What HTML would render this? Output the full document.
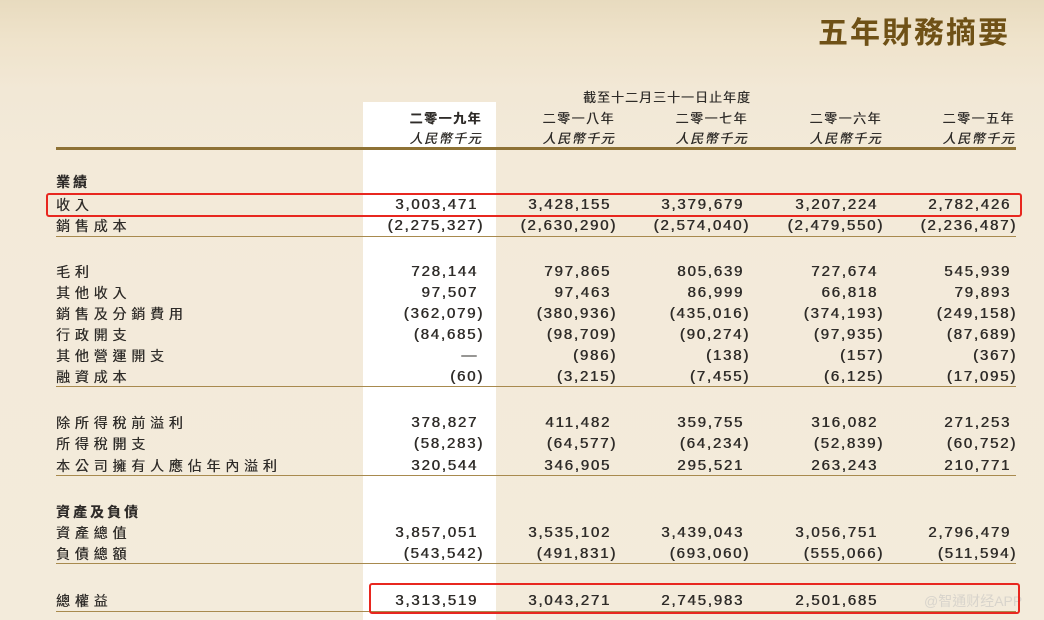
<!DOCTYPE html>
<html><head><meta charset="utf-8"><style>
body{margin:0;width:1044px;height:620px;overflow:hidden;position:relative;font-family:"Liberation Sans","Noto Sans CJK TC",sans-serif;color:#2f2c29;
background:linear-gradient(180deg,#e8dbbf 0px,#efe3cb 40px,#f2e8d6 90px,#f3ead9 160px,#f3ebdb 620px);}
.w{position:absolute;left:363px;top:102px;width:133px;height:518px;background:#fff;}
.t{position:absolute;white-space:nowrap;font-size:14px;letter-spacing:1px;}
.l{left:56px;letter-spacing:4.8px;text-shadow:0.3px 0 0 #2f2c29}
.n{text-align:right;width:130px;font-size:15px;letter-spacing:1.8px;text-shadow:0.5px 0 0 #2f2c29}
.line{position:absolute;left:56px;width:960px;height:1px;background:#a88a4e}
.box{position:absolute;border:2.5px solid #e8271f;border-radius:3px}
h1{position:absolute;right:34px;top:8px;margin:0;font-size:30px;font-weight:bold;color:#6f5116;letter-spacing:2px;font-family:"Noto Sans CJK TC",sans-serif}
.hd{position:absolute;font-size:13px;letter-spacing:1.5px;text-align:right;width:130px;text-shadow:0.4px 0 0 #2f2c29}
</style></head><body>
<div class="w"></div>
<h1>五年財務摘要</h1>
<div class="t" style="left:583px;top:87px;font-size:13px;text-shadow:0.3px 0 0 #2f2c29">截至十二月三十一日止年度</div>
<div class="hd" style="left:352px;top:108px;font-weight:bold">二零一九年</div>
<div class="hd" style="left:485px;top:108px">二零一八年</div>
<div class="hd" style="left:618px;top:108px">二零一七年</div>
<div class="hd" style="left:752px;top:108px">二零一六年</div>
<div class="hd" style="left:885px;top:108px">二零一五年</div>
<div class="hd" style="left:352px;top:128px;font-style:italic">人民幣千元</div>
<div class="hd" style="left:485px;top:128px;font-style:italic">人民幣千元</div>
<div class="hd" style="left:618px;top:128px;font-style:italic">人民幣千元</div>
<div class="hd" style="left:752px;top:128px;font-style:italic">人民幣千元</div>
<div class="hd" style="left:885px;top:128px;font-style:italic">人民幣千元</div>
<div class="line" style="top:147px;height:3px;background:#8e7235"></div>
<div class="line" style="top:236px"></div>
<div class="line" style="top:386px"></div>
<div class="line" style="top:475px"></div>
<div class="line" style="top:563px"></div>
<div class="line" style="top:611px"></div>
<div id="rows"></div>
<div class="t l" style="top:172px;font-weight:bold;letter-spacing:3px">業績</div>
<div class="t l" style="top:502px;font-weight:bold;letter-spacing:3px">資產及負債</div>
<script>
var R=[[195,"收入","3,003,471","3,428,155","3,379,679","3,207,224","2,782,426"],
[216,"銷售成本","(2,275,327)","(2,630,290)","(2,574,040)","(2,479,550)","(2,236,487)"],
[262,"毛利","728,144","797,865","805,639","727,674","545,939"],
[283,"其他收入","97,507","97,463","86,999","66,818","79,893"],
[304,"銷售及分銷費用","(362,079)","(380,936)","(435,016)","(374,193)","(249,158)"],
[325,"行政開支","(84,685)","(98,709)","(90,274)","(97,935)","(87,689)"],
[346,"其他營運開支","—","(986)","(138)","(157)","(367)"],
[367,"融資成本","(60)","(3,215)","(7,455)","(6,125)","(17,095)"],
[413,"除所得稅前溢利","378,827","411,482","359,755","316,082","271,253"],
[434,"所得稅開支","(58,283)","(64,577)","(64,234)","(52,839)","(60,752)"],
[456,"本公司擁有人應佔年內溢利","320,544","346,905","295,521","263,243","210,771"],
[523,"資產總值","3,857,051","3,535,102","3,439,043","3,056,751","2,796,479"],
[544,"負債總額","(543,542)","(491,831)","(693,060)","(555,066)","(511,594)"],
[591,"總權益","3,313,519","3,043,271","2,745,983","2,501,685",""]];
var X=[354,487,620,754,887],h="";
R.forEach(function(r){h+='<div class="t l" style="top:'+r[0]+'px">'+r[1]+'</div>';
for(var i=0;i<5;i++){var s=r[i+2],p=s.slice(-1)==")"?0:6;h+='<div class="t n" style="top:'+(r[0]+1)+'px;left:'+(X[i]-p)+'px">'+s+'</div>';}});
document.getElementById('rows').innerHTML=h;
</script>
<div class="t" style="left:924px;top:591px;color:#d8d4cc;font-size:14px;letter-spacing:0">@智通财经APP</div>
<div class="box" style="left:46px;top:193px;width:972px;height:20px"></div>
<div class="box" style="left:369px;top:583px;width:647px;height:27px"></div>
</body></html>
